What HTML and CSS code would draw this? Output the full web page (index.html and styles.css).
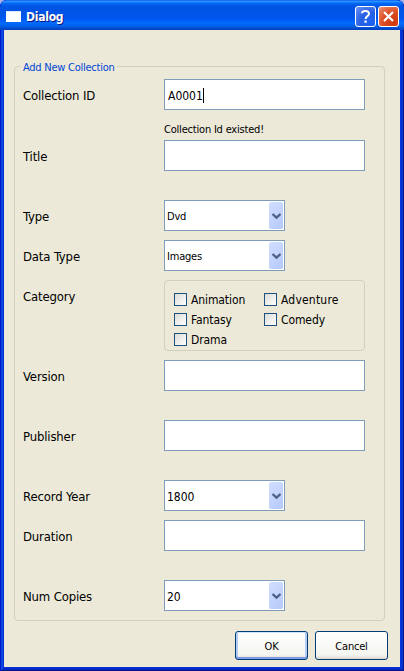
FILE: index.html
```html
<!DOCTYPE html>
<html lang="en">
<head>
<meta charset="utf-8">
<title>Dialog</title>
<link rel="stylesheet" href="styles.css">
</head>
<body>
<div class="window">
  <header class="titlebar">
    <span class="app-icon"></span>
    <span class="caption">Dialog</span>
    <span class="tool help"><svg width="19" height="19" viewBox="0 0 19 19"><path d="M6 6.3C6.2 3.2 13 3.2 13 6.8C13 9.2 9.6 9 9.6 12" fill="none" stroke="#fff" stroke-width="2"/><path d="M8.5 13.5h2.2v2.2H8.500z" fill="#fff"/></svg></span>
    <span class="tool close"><svg width="19" height="19" viewBox="0 0 19 19"><path d="M5 5l9 9M14 5l-9 9" stroke="#fff" stroke-width="2.2" fill="none"/></svg></span>
  </header>
  <main class="client">
    <section class="group">
      <h2 class="legend">Add New Collection</h2>
      <div class="form">
        <div class="row first"><label>Collection ID</label><div><div class="field id">A0001<i class="caret"></i></div><p class="message">Collection Id existed!</p></div></div>
        <div class="row tall"><label>Title</label><div class="field"></div></div>
        <div class="row"><label>Type</label><div class="field combo"><span>Dvd</span><b class="drop"><svg width="11" height="8" viewBox="0 0 11 8"><path d="M1.500 2l4 3.700 4-3.700" fill="none" stroke="#4d6185" stroke-width="2.300"/></svg></b></div></div>
        <div class="row"><label>Data Type</label><div class="field combo"><span>Images</span><b class="drop"><svg width="11" height="8" viewBox="0 0 11 8"><path d="M1.500 2l4 3.700 4-3.700" fill="none" stroke="#4d6185" stroke-width="2.300"/></svg></b></div></div>
        <div class="row category"><label>Category</label>
          <div class="checks">
            <span class="check"><i></i><em>Animation</em></span><span class="check"><i></i><em class="wide">Adventure</em></span>
            <span class="check"><i></i><em>Fantasy</em></span><span class="check"><i></i><em>Comedy</em></span>
            <span class="check"><i></i><em>Drama</em></span>
          </div>
        </div>
        <div class="row tall"><label>Version</label><div class="field"></div></div>
        <div class="row tall"><label>Publisher</label><div class="field"></div></div>
        <div class="row"><label>Record Year</label><div class="field combo number"><span>1800</span><b class="drop"><svg width="11" height="8" viewBox="0 0 11 8"><path d="M1.500 2l4 3.700 4-3.700" fill="none" stroke="#4d6185" stroke-width="2.300"/></svg></b></div></div>
        <div class="row tall"><label>Duration</label><div class="field"></div></div>
        <div class="row"><label>Num Copies</label><div class="field combo number"><span>20</span><b class="drop"><svg width="11" height="8" viewBox="0 0 11 8"><path d="M1.500 2l4 3.700 4-3.700" fill="none" stroke="#4d6185" stroke-width="2.300"/></svg></b></div></div>
      </div>
    </section>
    <footer class="actions"><span class="button default">OK</span><span class="button">Cancel</span></footer>
  </main>
</div>
</body>
</html>
```
FILE: styles.css
```css
* { box-sizing: border-box; }
html { background: #a9b4e6; }
body { margin: 0; font-family: "DejaVu Sans Condensed", "DejaVu Sans", sans-serif; font-stretch: condensed; font-size: 11px; color: #000; }
.window {
  width: 404px; height: 671px; padding: 0 4px 4px; overflow: hidden;
  border-radius: 7px 7px 0 0; background: #0831d9;
  box-shadow: inset 1px 0 #0019cf, inset -1px 0 #00138c, inset 0 -1px #00138c, inset 3px 0 #0848e0, inset -3px 0 #0234d4, inset 0 -3px #0428c6;
}
.titlebar {
  display: flex; align-items: center; height: 30px; margin: 0 -4px; padding: 3px 5px 0 6px;
  border-radius: 7px 7px 0 0;
  background: linear-gradient(#0058ee 0, #3593ff 4%, #288eff 6%, #127dff 8%, #036ffc 10%, #0262ee 14%, #0057e5 20%, #0054e3 24%, #0055eb 56%, #005bf5 66%, #026afe 76%, #0062ef 86%, #0052d6 92%, #0046c6 96%, #0043bd 100%);
}
.app-icon { width: 15px; height: 11px; background: #fff; border-top: 1px solid #dce8ff; }
.caption { flex: 1; margin-left: 5px; padding-top: 1px; font-size: 12px; font-weight: bold; letter-spacing: -.25px; color: #fff; text-shadow: 1px 1px #0a1883; }
.tool { width: 21px; height: 21px; border: 1px solid #fff; border-radius: 3px; }
.tool svg { display: block; }
.help { margin-right: 2px; background: radial-gradient(circle at 80% 85%, #1d63f0, #2860e4 50%, #6c94f2); }
.close { background: radial-gradient(circle at 80% 85%, #d13a10, #dc4c22 50%, #eb9374); }
.client { height: 637px; padding: 36px 14px 0 10px; background: #ece9d8; }
.group { width: 371px; height: 555px; border: 1px solid #d0d0bf; border-radius: 4px; }
.legend { width: max-content; height: 14px; margin: -7px 0 0 5px; padding: 1px 3px 0; font-size: 11px; font-weight: normal; line-height: 14px; color: #0046d5; background: #ece9d8; letter-spacing: -.25px; }
.form { padding: 5px 0 0 8px; }
.row { display: grid; grid-template-columns: 141px 201px; height: 40px; align-items: start; }
.row.first { height: 61px; }
.row.tall { height: 60px; }
.row.category { height: 80px; }
label { font-size: 13px; line-height: 33px; height: 31px; letter-spacing: -.15px; white-space: nowrap; }
.field { display: flex; align-items: center; height: 31px; border: 1px solid #7f9db9; background: #fff; }
.field.id { padding: 2px 0 0 3px; font-size: 12px; }
.caret { width: 1px; height: 15px; margin-top: -1px; background: #000; }
.message { margin: 0; padding-top: 13px; line-height: 14px; letter-spacing: -.2px; white-space: nowrap; }
.combo { width: 121px; justify-content: space-between; padding: 1px 1px 1px 2px; }
.combo span { padding-top: 2px; letter-spacing: -.2px; }
.number { font-size: 12px; }
.combo.number span { letter-spacing: 0; }
.drop { display: flex; align-items: center; justify-content: center; width: 14px; height: 27px; border-radius: 2px; background: linear-gradient(135deg, #d2deff, #b5c9f9); }
.checks { display: grid; grid-template-columns: 90px 90px; grid-auto-rows: 20px; width: 201px; height: 71px; padding: 8px 0 0 9px; border: 1px solid #d0d0bf; border-radius: 4px; }
.check { display: flex; align-items: center; font-size: 12px; }
.check i { width: 13px; height: 13px; margin-right: 4px; border: 1px solid #1c5180; background: linear-gradient(135deg, #dcdcd7, #fff); }
.check em { font-style: normal; letter-spacing: -.1px; padding-top: 2px; line-height: 14px; }
.check .wide { letter-spacing: .2px; }
.actions { display: flex; justify-content: flex-end; gap: 7px; margin: 10px -2px 0 0; }
.button { display: flex; align-items: center; justify-content: center; width: 73px; height: 29px; border: 1px solid #003c74; border-radius: 3px; background: linear-gradient(#fff, #f5f5f0 85%, #dcd8cb); letter-spacing: -.2px; padding-top: 1px; }
.default { box-shadow: inset 0 1px #cee7ff, inset 0 -2px #7c9ce8, inset 2px 0 #b3cdf5, inset -2px 0 #b3cdf5; }
```
